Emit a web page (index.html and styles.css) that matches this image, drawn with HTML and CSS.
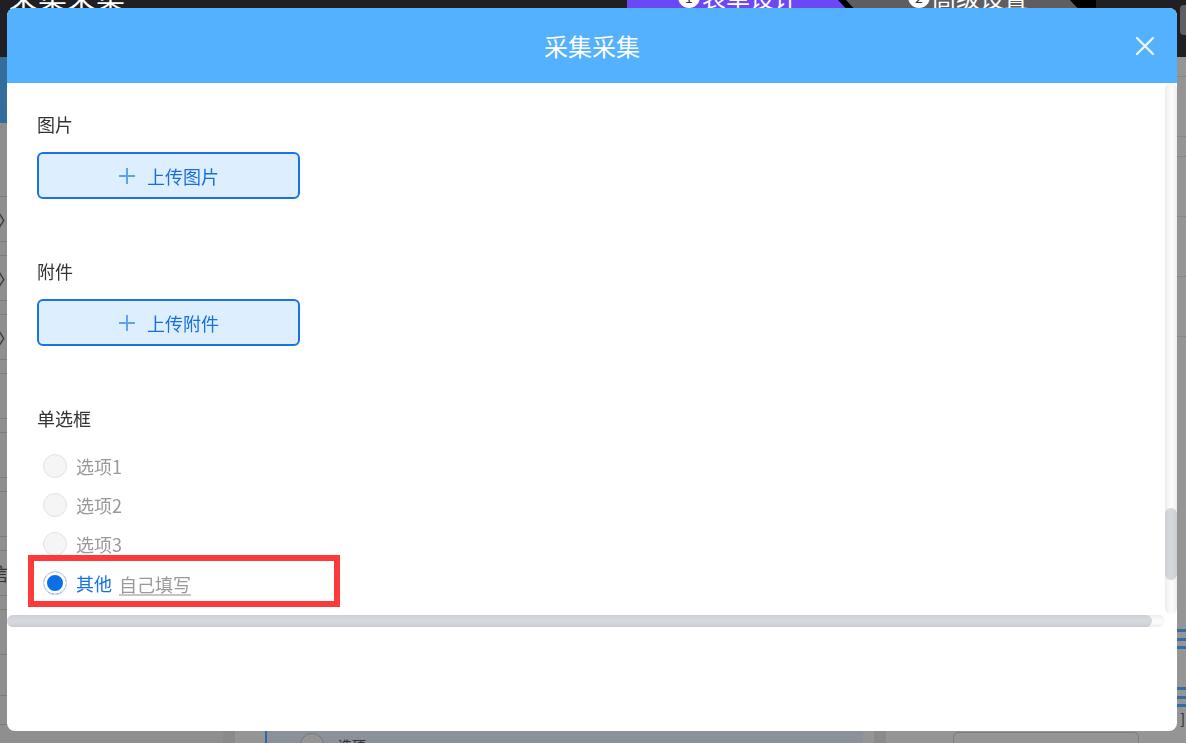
FILE: index.html
```html
<!DOCTYPE html>
<html lang="zh-CN">
<head>
    <meta charset="UTF-8">
    <meta name="viewport" content="width=device-width, initial-scale=1.0">
    <title>采集采集</title>
    <link rel="stylesheet" href="styles.css">
</head>
<body>
    <!-- Form designer behind the dialog (colours already dimmed by the mask) -->
    <div class="app">
        <header class="app-top">
            <div class="app-title">采集采集</div>
            <nav class="steps">
                <div class="step step-active"><div class="step-inner"><span class="step-num">1</span>表单设计</div></div>
                <div class="step step-next"><div class="step-inner"><span class="step-num">2</span>高级设置</div></div>
            </nav>
            <div class="app-top-btn"></div>
        </header>
        <div class="app-main">
            <aside class="widgets">
                <div class="widgets-head"></div>
                <div class="widgets-search"></div>
                <div class="widget">〉</div>
                <div class="widget-gap"></div>
                <div class="widget">〉</div>
                <div class="widget-gap"></div>
                <div class="widget">〉</div>
                <div class="widget-gap"></div>
                <div class="widget"></div>
                <div class="widget-gap"></div>
                <div class="widget"></div>
                <div class="widget-gap"></div>
                <div class="widget"></div>
                <div class="widget-gap"></div>
                <div class="widget widget-name">信</div>
                <div class="widget-gap"></div>
                <div class="widget"></div>
                <div class="widget-box"></div>
            </aside>
            <div class="splitter"></div>
            <section class="canvas">
                <div class="phone">
                    <div class="phone-radio"><span class="phone-dot"></span>选项</div>
                </div>
            </section>
            <div class="splitter"></div>
            <aside class="props">
                <div class="props-row"></div>
                <div class="props-row props-row-tall"></div>
                <div class="props-row"></div>
                <div class="props-row props-row-tall"></div>
                <div class="props-row props-row-tall"></div>
                <div class="props-row props-row-tall"></div>
                <div class="props-spacer"></div>
                <div class="props-option"><span class="drag-icon"></span></div>
                <div class="props-option"><span class="drag-icon"></span><span class="props-close">]</span></div>
                <div class="props-foot">
                    <div class="props-box"><span class="add-dot"></span></div>
                </div>
            </aside>
        </div>
    </div>

    <div class="mask">
        <div class="modal">
            <div class="modal-header">
                <span></span>
                <h2 class="modal-title">采集采集</h2>
                <button class="modal-close" type="button" aria-label="关闭">
                    <svg viewBox="0 0 20 20" width="20" height="20"><path d="M2 2L18 18M18 2L2 18" stroke="currentColor" stroke-width="2.4" stroke-linecap="round"/></svg>
                </button>
            </div>
            <div class="modal-body">
                <form class="form">
                    <div class="form-item">
                        <label class="form-label">图片</label>
                        <button type="button" class="upload-btn">
                            <svg class="plus" viewBox="0 0 18 18" width="18" height="18"><path d="M9 1V17M1 9H17" stroke="currentColor" stroke-width="2"/></svg>
                            上传图片
                        </button>
                    </div>

                    <div class="form-item">
                        <label class="form-label">附件</label>
                        <button type="button" class="upload-btn">
                            <svg class="plus" viewBox="0 0 18 18" width="18" height="18"><path d="M9 1V17M1 9H17" stroke="currentColor" stroke-width="2"/></svg>
                            上传附件
                        </button>
                    </div>

                    <div class="form-item">
                        <label class="form-label">单选框</label>
                        <div class="radio-group">
                            <label class="radio"><span class="radio-dot"></span>选项1</label>
                            <label class="radio"><span class="radio-dot"></span>选项2</label>
                            <label class="radio"><span class="radio-dot"></span>选项3</label>
                            <label class="radio radio-checked radio-marked">
                                <span class="radio-dot"></span>其他
                                <span class="other-input">自己填写</span>
                            </label>
                        </div>
                    </div>
                </form>

                <!-- scrollbars of the dialog body -->
                <div class="scroll-y"><div class="scroll-y-thumb"></div></div>
                <div class="scroll-x"><div class="scroll-x-thumb"></div></div>
            </div>
            <div class="modal-footer"></div>
        </div>
    </div>
</body>
</html>
```

FILE: styles.css
```css
/* General Reset */
*,
*::before,
*::after {
    margin: 0;
    padding: 0;
    box-sizing: border-box;
}

html,
body {
    height: 100%;
}

body {
    font-family: "Noto Sans CJK SC", "Noto Sans", sans-serif;
    background-color: #949494;
    color: #333;
    overflow: hidden;
}

/* ---------- background app ---------- */
.app {
    height: 100vh;
    display: flex;
    flex-direction: column;
}

.app-top {
    height: 57px;
    flex-shrink: 0;
    display: flex;
    background-color: #1f1f24;
    overflow: hidden;
}

.app-title {
    width: 627px;
    padding-left: 9px;
    margin-top: -21px;
    font-size: 29px;
    line-height: 34px;
    color: #fff;
}

.steps {
    display: flex;
    background-color: #000;
    height: 57px;
}

.step {
    width: 237px;
    padding-left: 51px;
    color: #fff;
    font-size: 24px;
    line-height: 30px;
    clip-path: polygon(0 0, calc(100% - 26px) 0, 100% 28px, calc(100% - 26px) 100%, 0 100%);
}

.step-active {
    background-color: #6c47f6;
}

.step-next {
    width: 250px;
    margin-left: -18px;
    padding-left: 62px;
    background-color: #5e5d62;
    clip-path: polygon(0 0, calc(100% - 26px) 0, 100% 28px, calc(100% - 26px) 100%, 0 100%, 26px 28px);
}

.step-inner {
    margin-top: -18px;
    display: flex;
    align-items: center;
    gap: 2px;
}

.step-num {
    width: 22px;
    height: 22px;
    border-radius: 50%;
    background-color: #fff;
    color: #333;
    font-size: 14px;
    line-height: 22px;
    text-align: center;
}

.app-top-btn {
    margin-left: auto;
    margin-right: -6px;
    margin-top: 5px;
    width: 12px;
    height: 30px;
    border-radius: 4px;
    background-color: #5f5e63;
}

.app-main {
    flex: 1;
    display: flex;
}

.widgets {
    width: 223px;
    background-color: #8f8f8f;
}

.widgets-head {
    height: 66px;
    background-color: #346d9b;
}

.widgets-search {
    height: 74px;
    border-bottom: 1px solid #7d7d7d;
}

.widget {
    height: 45px;
    border-bottom: 1px solid #7d7d7d;
    color: #333;
    font-size: 18px;
    line-height: 44px;
    text-indent: -3px;
}

.widget-name {
    text-indent: -10px;
}

.widget-gap {
    height: 14px;
    border-bottom: 1px solid #7d7d7d;
}

.widget-box {
    margin-top: 40px;
    width: 34px;
    height: 30px;
    border: 1px solid #7c7c7c;
    border-left: none;
    border-radius: 0 5px 0 0;
}

.splitter {
    width: 12px;
    background-color: #8a8a8a;
}

.canvas {
    width: 639px;
    padding-left: 30px;
    padding-right: 11px;
    background-color: #959595;
}

.phone {
    height: 100%;
    background-color: #8a9199;
    border-left: 2px solid #2e6aa4;
    display: flex;
    flex-direction: column;
    justify-content: flex-end;
}

.phone-radio {
    display: flex;
    align-items: center;
    gap: 14px;
    padding-left: 33px;
    margin-bottom: -14px;
    font-size: 14px;
    color: #333;
    height: 24px;
}

.phone-dot {
    width: 24px;
    height: 24px;
    border-radius: 50%;
    border: 1px solid #777;
    background-color: #959595;
}

.props {
    flex: 1;
    background-color: #959595;
    display: flex;
    flex-direction: column;
    overflow: hidden;
}

.props-row {
    height: 20px;
    border-bottom: 1px solid #868686;
}

.props-row-tall {
    height: 60px;
}

.props-spacer {
    flex: 1;
}

.props-option {
    height: 58px;
    display: flex;
    justify-content: flex-end;
    align-items: center;
    position: relative;
}

.drag-icon {
    width: 20px;
    height: 20px;
    margin-right: -11px;
    border-top: 3px solid #2f6ea8;
    border-bottom: 3px solid #2f6ea8;
    background: linear-gradient(#2f6ea8, #2f6ea8) center / 100% 3px no-repeat;
}

.props-close {
    position: absolute;
    right: 1px;
    bottom: 0;
    font-size: 14px;
    line-height: 16px;
    color: #222;
}

.props-foot {
    height: 17px;
    padding-left: 67px;
}

.props-box {
    position: relative;
    display: block;
    width: 186px;
    height: 14px;
    margin-top: 6px;
    border: 1px solid #7c7c7c;
    border-radius: 5px;
}

.add-dot {
    position: absolute;
    left: 143px;
    top: -34px;
    width: 24px;
    height: 24px;
    border-radius: 50%;
    background-color: #4b2bb3;
}

/* ---------- dialog ---------- */
.mask {
    position: fixed;
    inset: 0;
    padding: 8px 9px 12px 7px;
}

.modal {
    height: 100%;
    background-color: #fff;
    border-radius: 8px;
    overflow: hidden;
    display: flex;
    flex-direction: column;
}

.modal-header {
    height: 75px;
    flex-shrink: 0;
    background-color: #53b1fd;
    display: grid;
    grid-template-columns: 1fr auto 1fr;
    align-items: center;
}

.modal-title {
    font-size: 24px;
    font-weight: normal;
    color: #fff;
    line-height: 75px;
}

.modal-close {
    justify-self: end;
    margin-right: 22px;
    width: 20px;
    height: 20px;
    border: none;
    background: none;
    color: rgba(255, 255, 255, 0.88);
    cursor: pointer;
    display: flex;
}

.modal-body {
    position: relative;
    height: 544px;
    flex-shrink: 0;
    overflow: hidden;
}

.scroll-y {
    position: absolute;
    top: 0;
    right: 0;
    width: 12px;
    height: 531px;
    border-radius: 6px;
    background: linear-gradient(to right, #ececec, #f9f9f9 35%, #fbfbfb 65%, #ededed);
}

.scroll-y-thumb {
    margin-top: 425px;
    height: 72px;
    border-radius: 6px;
    background: linear-gradient(to right, #cdd0d4, #d5d8dc 40%, #d3d6da 70%, #c9ccd0);
}

.scroll-x {
    position: absolute;
    left: 0;
    bottom: 0;
    width: 1158px;
    height: 12px;
    border-radius: 6px;
    background: linear-gradient(#ececec, #f9f9f9 35%, #fbfbfb 65%, #ededed);
}

.scroll-x-thumb {
    width: 1145px;
    height: 12px;
    border-radius: 6px;
    background: linear-gradient(#cdd0d4, #d5d8dc 40%, #d3d6da 70%, #c7cace);
}

.modal-footer {
    flex: 1;
}

/* ---------- form ---------- */
.form {
    padding-top: 29px;
}

.form-item {
    padding: 0 30px;
    margin-bottom: 60px;
}

.form-label {
    display: block;
    font-size: 18px;
    line-height: 24px;
    color: #333;
    margin-bottom: 16px;
}

.upload-btn {
    width: 263px;
    height: 47px;
    border: 2px solid #1a73e6;
    border-radius: 6px;
    background-color: #ddeeff;
    color: #1a6fd6;
    font-family: inherit;
    font-size: 18px;
    display: flex;
    align-items: center;
    justify-content: center;
    gap: 11px;
    cursor: pointer;
}

.plus {
    color: #5ea2f0;
}

.radio-group {
    padding-left: 6px;
}

.radio {
    position: relative;
    height: 39px;
    display: flex;
    align-items: center;
    gap: 9px;
    font-size: 18px;
    color: #999;
}

.radio-dot {
    width: 24px;
    height: 24px;
    border-radius: 50%;
    border: 1px solid #e2e2e2;
    background-color: #f5f5f5;
}

.radio-checked {
    color: #1473e6;
}

.radio-checked .radio-dot {
    border-color: #dcdcdc;
    background-color: #0b6fe6;
    box-shadow: inset 0 0 0 3px #fff;
}

.other-input {
    margin-left: -2px;
    margin-top: 4px;
    color: #999;
    line-height: 20px;
    border-bottom: 2px solid #c6c6c6;
}

/* red annotation frame around the "其他" option */
.radio-marked::after {
    content: "";
    position: absolute;
    top: -8px;
    left: -15px;
    width: 312px;
    height: 52px;
    border: 6px solid #fd3a3b;
}
```
